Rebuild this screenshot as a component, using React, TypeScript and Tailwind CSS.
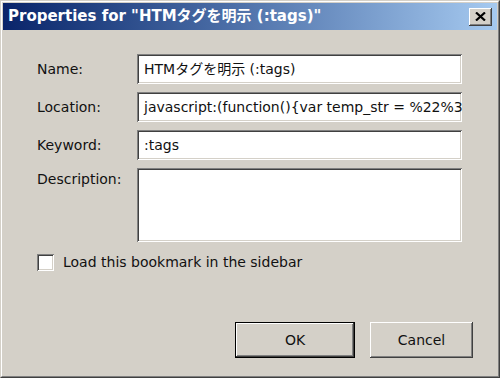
const raised =
  'shadow-[inset_-1px_-1px_#404040,inset_1px_1px_#ffffff,inset_-2px_-2px_#808080,inset_2px_2px_#d4d0c8]';
const sunken =
  'shadow-[inset_1px_1px_#808080,inset_-1px_-1px_#ffffff,inset_2px_2px_#404040,inset_-2px_-2px_#d4d0c8]';

const fields = [
  { label: 'Name:', value: 'HTMタグを明示 (:tags)' },
  {
    label: 'Location:',
    value:
      'javascript:(function(){var temp_str = %22%3Cstyle%3E*{outline:1px solid red}%3C/style%3E%22',
  },
  { label: 'Keyword:', value: ':tags' },
];

export default function App() {
  return (
    <div
      className="h-[378px] w-[500px] overflow-hidden border border-t-[#d4d0c8] border-l-[#d4d0c8] border-r-[#404040] border-b-[#404040] bg-[#d4d0c8] text-[14px] text-[#111]"
      style={{ fontFamily: '"DejaVu Sans", Tahoma, "Liberation Sans", "Noto Sans CJK JP", sans-serif' }}
    >
      <div className="flex h-full flex-col border border-t-white border-l-white border-r-[#808080] border-b-[#808080] p-px">
        <div className="flex h-[27px] shrink-0 items-center justify-between bg-gradient-to-r from-[#0a246a] to-[#a6caf0] pl-[5px] pr-[5px]">
          <span className="whitespace-nowrap text-[15px] font-bold text-white">
            Properties for "HTMタグを明示 (:tags)"
          </span>
          <button
            className={`flex h-[18px] w-[23px] items-center justify-center bg-[#d4d0c8] ${raised}`}
          >
            <svg width="11" height="9" viewBox="0 0 11 9">
              <path d="M1 0.5 L10 8.5 M10 0.5 L1 8.5" stroke="#000" strokeWidth="2.2" />
            </svg>
          </button>
        </div>

        <div className="flex flex-1 flex-col pl-[34px] pr-[24px] pt-[24px]">
          <div className="grid grid-cols-[100px_325px] gap-y-[8px]">
            {fields.map((f) => (
              <div key={f.label} className="contents">
                <div className="flex h-[30px] items-center">{f.label}</div>
                <div className={`flex h-[30px] items-center overflow-hidden bg-white px-[7px] ${sunken}`}>
                  <span className="whitespace-nowrap">{f.value}</span>
                </div>
              </div>
            ))}
            <div className="pt-[1px]">Description:</div>
            <div className={`h-[74px] bg-white ${sunken}`} />
          </div>

          <label className="mt-[10px] flex items-center gap-[9px]">
            <span className={`h-[17px] w-[17px] bg-white ${sunken}`} />
            <span>Load this bookmark in the sidebar</span>
          </label>

          <div className="mt-auto mb-[17px] flex justify-end gap-[15px]">
            <button className={`h-[36px] w-[120px] border border-black bg-[#d4d0c8] ${raised}`}>OK</button>
            <button className={`h-[36px] w-[103px] bg-[#d4d0c8] ${raised}`}>Cancel</button>
          </div>
        </div>
      </div>
    </div>
  );
}
